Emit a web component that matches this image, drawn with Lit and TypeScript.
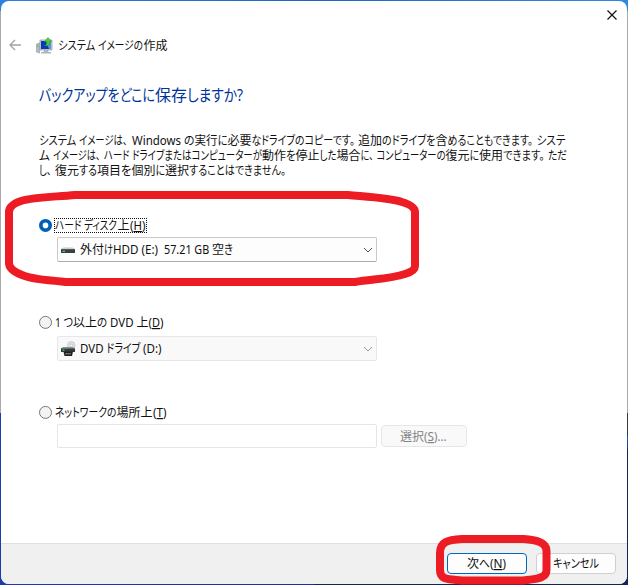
import { LitElement, html, svg, css } from "lit";
import { customElement, property } from "lit/decorators.js";

// A run is text, its start and the width it occupies, with an optional underline flag.
type Run = [string, number, number, boolean?];

@customElement("run-line")
class RunLine extends LitElement {
  static styles = css`
    :host { display: block; flex: none; color: #111; font-size: 12px; }
    svg { display: block; overflow: visible; }
    text {
      font-family: "Noto Sans", "Noto Sans CJK JP", sans-serif;
      fill: currentColor;
      white-space: pre;
      font-feature-settings: "palt";
    }
    .key { text-decoration: underline; }
  `;
  @property({ attribute: false }) runs: Run[] = [];
  @property({ type: Number }) height = 15;
  @property({ type: Number }) base = 12;
  render() {
    const last = this.runs[this.runs.length - 1];
    return html`<svg width=${last[1] + last[2]} height=${this.height}><text y=${this.base}>${this.runs.map(([t, x, w, key]) => svg`<tspan class=${key ? "key" : ""} x=${x} textLength=${w} lengthAdjust="spacingAndGlyphs">${t}</tspan>`)}</text></svg>`;
  }
}

const title: Run[] = [["システム ", 0, 40], ["イメージの", 40, 45], ["作成", 85.5, 24]];
const heading: Run[] = [["バックアップをどこに", 0, 116], ["保存", 116, 32], ["しますか?", 148, 56]];
const body: Run[][] = [
  [["システム ", 0, 40], ["イメージは、", 40, 48.5], ["Windows ", 93, 52], ["の", 145, 10.5], ["実行", 155.5, 23], ["に", 178.5, 10],
   ["必要", 188.5, 24], ["なドライブの", 212.5, 53], ["コピーです。", 265.5, 50.5], ["追加", 319, 24], ["のドライブを", 343, 53.5], ["含", 396.5, 12],
   ["めることもできます。", 408.5, 85.5], ["システ", 497.5, 29]],
  [["ム ", 0, 14], ["イメージは、", 14, 47.5], ["ハード ", 65, 28], ["ドライブまたはコンピューターが", 93, 130], ["動作", 223, 24], ["を", 247, 9.5],
   ["停止", 256.5, 24], ["した", 280.5, 17], ["場合", 297.5, 24], ["に、", 321.5, 13], ["コンピューターの", 337.5, 69], ["復元", 406.5, 24],
   ["に", 430.5, 9.5], ["使用", 440, 24], ["できます。", 464, 41.5], ["ただ", 509, 19]],
  [["し、", 0, 12.5], ["復元", 16, 24], ["する", 40, 18], ["項目", 58, 24], ["を", 82, 10.5], ["個別", 92.5, 24], ["に", 116.5, 9.5],
   ["選択", 126, 24], ["することはできません。", 150, 97]],
];
const hard: Run[] = [["ハード ", 0, 29], ["ディスク", 29, 33], ["上", 62.5, 12], ["(", 75, 3.5], ["H", 78.5, 8.5, true], [")", 87, 3.5]];
const dvd: Run[] = [["1 ", 0, 8.5], ["つ", 8.5, 9.5], ["以上", 18, 24], ["の ", 42, 13], ["DVD ", 55, 26.5], ["上", 81.5, 12], ["(", 93.5, 3.5], ["D", 97, 8, true], [")", 105, 3.5]];
const net: Run[] = [["ネットワークの", 0, 61.5], ["場所上", 61.5, 36], ["(", 98, 3.5], ["T", 101.5, 6.5, true], [")", 108, 3.5]];
const hdd: Run[] = [["外付", 0, 24], ["け", 24, 9], ["HDD (E:)  ", 33, 51], ["57.21 GB ", 84, 48], ["空", 132, 12], ["き", 144, 9]];
const drive: Run[] = [["DVD ", 0, 26.5], ["ドライブ ", 26.5, 36.5], ["(D:)", 63, 18.5]];
const choose: Run[] = [["選択", 0, 24], ["(", 24, 3.5], ["S", 27.5, 6.5, true], [")...", 34, 12.5]];
const next: Run[] = [["次", 0, 12], ["へ", 12, 11], ["(", 23, 3.5], ["N", 26.5, 9, true], [")", 35.5, 3.5]];
const cancel: Run[] = [["キャンセル", 0, 46]];

@customElement("app-root")
class AppRoot extends LitElement {
  static styles = css`
    :host { display: block; position: relative; width: 628px; height: 585px; overflow: hidden; box-sizing: border-box;
      padding: 1px 1px 1px 1px;
      background:
        linear-gradient(90deg, #2b82dc, #2065bd 50%, #3189df) 0 0 / 100% 11px no-repeat,
        linear-gradient(#333842 22px, #2459a8 24px, #1b3f8f 34px, #16225c 38px) 100% 100% / 50% 172px no-repeat,
        linear-gradient(#aaa, #aaa) 0 0 / 100% 413px no-repeat,
        linear-gradient(90deg, #1b3caf, #142a79); }
    .window { box-sizing: border-box; height: 583px; display: flex; flex-direction: column; background: #fff; border-radius: 8px; overflow: hidden; }
    .close { display: flex; justify-content: flex-end; height: 28px; padding: 9px 10px 0 0; box-sizing: border-box; }
    .bar { display: flex; height: 32px; align-items: center; padding-left: 8px; }
    .bar .logo { margin: 0 5px 0 14px; }
    svg { display: block; flex: none; }
    .content { flex: 1; padding: 23px 0 0 38px; }
    .heading { color: #003399; font-size: 16px; }
    .copy { padding: 27px 0 0 0; }
    .option { display: flex; flex-direction: column; }
    .first { margin-top: 39px; }
    .second { margin-top: 52px; }
    .third { margin-top: 43px; }
    .label { display: flex; align-items: center; height: 16px; gap: 1px; }
    .name { height: 15px; border: 1px solid transparent; box-sizing: border-box; width: 93px; display: flex; align-items: center; }
    .focus { border: 1px dotted #111; }
    .combo { display: flex; align-items: center; box-sizing: border-box; width: 320px; height: 25px; margin: 4px 0 0 18px; padding: 0 3px 0 2px; gap: 4px; border: 1px solid #c8c8c8; border-bottom-color: #aaa; border-radius: 2px; background: #fdfdfd; }
    .combo.off { border-color: #e7e7e7; background: #f9f9f9; margin-top: 6px; }
    .chev { margin-left: auto; }
    .place { display: flex; align-items: center; gap: 4px; margin: 4px 0 0 18px; }
    .field { box-sizing: border-box; width: 320px; height: 24px; border: 1px solid #e6e6e6; border-radius: 2px; background: #fff; }
    .btn { display: flex; align-items: center; justify-content: center; box-sizing: border-box; width: 80px; height: 21px; border: 1px solid #d0d0d0; border-radius: 4px; background: #fdfdfd; }
    .btn.default { border-color: #0067c0; padding-right: 2px; }
    .btn.off { width: 86px; height: 22px; padding-right: 1px; border-color: #e6e6e6; background: #f9f9f9; }
    .btn.off run-line { color: #838383; }
    .footer { display: flex; justify-content: flex-end; box-sizing: border-box; height: 41px; gap: 9px; padding: 9px 11px 0 0; border-top: 1px solid #dfdfdf; background: #f0f0f0; }
    .marks { position: absolute; left: 0; top: 0; pointer-events: none; }
  `;

  radio(on: boolean) {
    return html`<svg width="14" height="14" viewBox="0 0 14 14">
      ${on
        ? svg`<circle cx="6.5" cy="7.4" r="6.5" fill="#005fb8"/><circle cx="6.5" cy="7.4" r="2.8" fill="#fff"/>`
        : svg`<circle cx="6.5" cy="7.4" r="6" fill="#f3f3f3" stroke="#777"/>`}
    </svg>`;
  }
  chevron(color: string) {
    return html`<svg class="chev" width="10" height="8" viewBox="0 0 10 8"><path d="M1 2L5 6L9 2" fill="none" stroke=${color}/></svg>`;
  }

  render() {
    return html`
      <div class="window">
        <div class="close"><svg width="10" height="10" viewBox="0 0 10 10"><path d="M.5.5L9.5 9.5M9.5.5L.5 9.5" stroke="#111" stroke-width="1.2"/></svg></div>
        <div class="bar">
          <svg width="13" height="12" viewBox="0 0 13 12"><path d="M12 6H.7M6 1L1 6L6 11" fill="none" stroke="#a3a3a3" stroke-width="1.3"/></svg>
          <svg class="logo" width="17" height="17" viewBox="0 0 17 17">
            <path d="M.5 7L3.5 6V16L.5 15Z" fill="#b4bcc0" stroke="#8c989c" stroke-width=".6"/>
            <path d="M1.3 8.5L2.4 8.2V10L1.3 10.2Z" fill="#4fc63a"/>
            <path d="M4 3H16V13H4Z" fill="#c9d1d6" stroke="#8b979d" stroke-width=".7"/>
            <path d="M5 4H15V12H5Z" fill="#0c35b8"/>
            <path d="M10 4H15V12H13Z" fill="#5d8fe4"/>
            <path d="M8 13H12L12.5 15H15V16.5H5V15H7.5Z" fill="#aeb6ba"/>
            <path d="M8.5 8.6C11 8.2 10.7 6.5 10.7 4.6H8.5L12 .6L15.5 4.6H13.5C13.7 8 12 9.5 8.5 8.6Z" fill="#4bd033" stroke="#259a25" stroke-width=".5"/>
          </svg>
          <run-line .runs=${title}></run-line>
        </div>
        <div class="content">
          <run-line class="heading" .runs=${heading} .height=${22} .base=${16.5}></run-line>
          <div class="copy">${body.map((r) => html`<run-line .runs=${r}></run-line>`)}</div>
          <div class="option first">
            <div class="label">${this.radio(true)}<div class="name focus"><run-line .runs=${hard}></run-line></div></div>
            <div class="combo">
              <svg width="16" height="16" viewBox="0 0 16 16">
                <path d="M3.5 5H12.5L14.7 7.5H1.3Z" fill="#dfe2e3"/><path d="M1 7H15V11H1Z" fill="#3c4040"/><path d="M1 7.2H15" stroke="#777" stroke-width=".6"/><path d="M2.5 9.3H5" stroke="#35e03d" stroke-width="1.2"/>
              </svg>
              <run-line .runs=${hdd}></run-line>${this.chevron("#555")}
            </div>
          </div>
          <div class="option second">
            <div class="label">${this.radio(false)}<div class="name"><run-line .runs=${dvd}></run-line></div></div>
            <div class="combo off">
              <svg width="16" height="16" viewBox="0 0 16 16">
                <circle cx="11.3" cy="4.4" r="3.9" fill="#d9e0e3" stroke="#bcc4c8" stroke-width=".6"/><circle cx="11.3" cy="4.4" r="1.2" fill="#fff" stroke="#a8b0b4" stroke-width=".5"/>
                <path d="M3 6H13L15 7.6H1Z" fill="#8b8f90"/><path d="M1 7.4H15V11H1Z" fill="#333737"/><path d="M2.5 9.2H4.5" stroke="#35e03d" stroke-width="1.2"/>
                <path d="M3.5 10.6H13L12 15H4.5Z" fill="#1e2020"/><path d="M5.5 12.8H11" stroke="#b8b8b8" stroke-width="1" stroke-dasharray="1.4 .5"/>
              </svg>
              <run-line .runs=${drive}></run-line>${this.chevron("#999")}
            </div>
          </div>
          <div class="option third">
            <div class="label">${this.radio(false)}<div class="name"><run-line .runs=${net}></run-line></div></div>
            <div class="place"><div class="field"></div><div class="btn off"><run-line .runs=${choose}></run-line></div></div>
          </div>
        </div>
        <div class="footer">
          <div class="btn default"><run-line .runs=${next}></run-line></div>
          <div class="btn"><run-line .runs=${cancel}></run-line></div>
        </div>
      </div>
      <svg class="marks" width="628" height="585" viewBox="0 0 628 585" fill="none" stroke="#ed1c24" stroke-width="8">
        <path d="M75 195H348C370 197 390 198 402 202Q415 206 415 212V266Q415 271 405 274C390 279 373 279 355 282H67C45 280 32 279 22 275Q9 270 9 263V212Q9 205 21 201C34 197 53 197 75 195Z"/>
        <path d="M462 539H523C534 540 546.5 541 546.5 551V570C546.5 579 535 579 523 580.5H462C448 579 440 580 440 570V553C440 542 447 540 462 539Z"/>
      </svg>
    `;
  }
}
